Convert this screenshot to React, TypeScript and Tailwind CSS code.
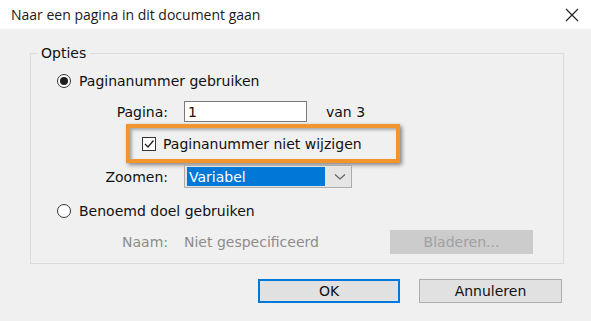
import React from "react";

function Radio({ checked }: { checked?: boolean }) {
  return (
    <span className="w-[14px] h-[14px] rounded-full border border-[#333333] bg-white flex items-center justify-center shrink-0">
      {checked && <span className="w-[8px] h-[8px] rounded-full bg-[#1f1f1f]" />}
    </span>
  );
}

export default function App() {
  return (
    <div
      className="w-[591px] h-[321px] bg-[#f0f0f0] flex flex-col text-[#111] overflow-hidden"
      style={{ fontFamily: '"DejaVu Sans", Verdana, sans-serif' }}
    >
      {/* Title bar */}
      <div className="h-[29px] bg-white flex items-center justify-between pl-[11px] pr-[11px] shrink-0">
        <span className="text-[14px] leading-none font-['Open_Sans',sans-serif] text-[#1a1a1a]">
          Naar een pagina in dit document gaan
        </span>
        <svg width="14" height="14" viewBox="0 0 14 14" className="mr-[1px]">
          <path d="M1 1 L13 13 M13 1 L1 13" stroke="#222" strokeWidth="1.2" fill="none" />
        </svg>
      </div>

      {/* Body */}
      <div className="pt-[16px] pl-[30px]">
        <fieldset className="w-[534px] h-[219px] border border-[#dcdcdc] m-0 p-0">
          <legend className="ml-[6px] px-[4px] text-[14px] leading-[16px]">Opties</legend>

          <div className="pl-[26px]">
            {/* Radio 1 */}
            <div className="flex items-center gap-[8px] h-[18px] mt-[11px]">
              <Radio checked />
              <span className="text-[14px] leading-none">Paginanummer gebruiken</span>
            </div>

            {/* Pagina row */}
            <div className="flex items-center mt-[11px] h-[21px]">
              <span className="w-[111px] text-right text-[14px] leading-none">Pagina:</span>
              <div className="ml-[16px] w-[123px] h-[21px] bg-white border border-[#7a7a7a] flex items-center pl-[3px] text-[14px] leading-none">
                1
              </div>
              <span className="ml-[19px] text-[14px] leading-none">van 3</span>
            </div>

            {/* Highlighted checkbox */}
            <div className="ml-[69px] mt-[2px] w-[274px] h-[39px] border-[4px] border-[#f2952f] shadow-[2px_2px_4px_rgba(0,0,0,0.45),inset_2px_2px_3px_rgba(0,0,0,0.3)] flex items-center pl-[12px] gap-[7px]">
              <span className="w-[14px] h-[14px] border border-[#333333] bg-white flex items-center justify-center">
                <svg width="12" height="12" viewBox="0 0 12 12">
                  <path d="M2 6 L5 9 L10.5 2.5" stroke="#222" strokeWidth="1.3" fill="none" />
                </svg>
              </span>
              <span className="text-[14px] leading-none">Paginanummer niet wijzigen</span>
            </div>

            {/* Zoomen row */}
            <div className="flex items-center mt-[2px] h-[23px]">
              <span className="w-[111px] text-right text-[14px] leading-none">Zoomen:</span>
              <div className="ml-[16px] w-[168px] h-[23px] bg-[#e5e5e5] border border-[#acacac] flex items-center pl-[2px]">
                <div className="w-[138px] h-[19px] bg-[#0078d7] text-white text-[14px] leading-none flex items-center pl-[2px]">
                  Variabel
                </div>
                <svg width="12" height="8" viewBox="0 0 12 8" className="ml-[9px]">
                  <path d="M1 1.5 L6 6 L11 1.5" stroke="#606060" strokeWidth="1.2" fill="none" />
                </svg>
              </div>
            </div>

            {/* Radio 2 */}
            <div className="flex items-center gap-[8px] h-[18px] mt-[14px]">
              <Radio />
              <span className="text-[14px] leading-none">Benoemd doel gebruiken</span>
            </div>

            {/* Naam row */}
            <div className="flex items-center mt-[10px] h-[24px]">
              <span className="w-[111px] text-right text-[14px] leading-none text-[#8c8c8c]">Naam:</span>
              <span className="ml-[16px] w-[206px] text-[14px] leading-none text-[#8c8c8c]">Niet gespecificeerd</span>
              <div className="w-[143px] h-[24px] bg-[#cccccc] flex items-center justify-center text-[14px] leading-none text-[#a0a0a0]">
                Bladeren...
              </div>
            </div>
          </div>
        </fieldset>

        {/* Buttons */}
        <div className="flex mt-[15px] ml-[228px] gap-[19px]">
          <div className="w-[142px] h-[24px] bg-[#e1e1e1] border-2 border-[#0078d7] flex items-center justify-center text-[14px] leading-none">
            OK
          </div>
          <div className="w-[143px] h-[24px] bg-[#e1e1e1] border border-[#adadad] flex items-center justify-center text-[14px] leading-none">
            Annuleren
          </div>
        </div>
      </div>
    </div>
  );
}
